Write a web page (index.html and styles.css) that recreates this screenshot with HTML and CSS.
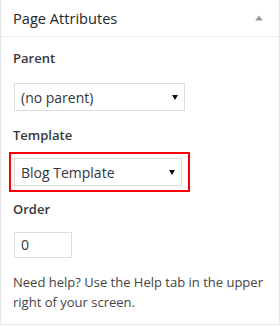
FILE: index.html
```html
<!DOCTYPE html>
<html>
<head>
<meta charset="utf-8">
<link rel="stylesheet" href="styles.css">
</head>
<body>
<div class="panel">
  <div class="panel-header">
    <h2 class="panel-title">Page Attributes</h2>
    <svg class="toggle" width="8" height="6" viewBox="0 0 8 6"><path d="M4 0.5 L7.8 5.5 L0.2 5.5 Z" fill="#999"/></svg>
  </div>
  <div class="panel-body">
    <p class="label label-first">Parent</p>
    <div class="select select-wide">
      <span>(no parent)</span>
      <svg class="caret" width="6" height="5" viewBox="0 0 6 5"><path d="M0 0 H6 L3 5 Z" fill="#111"/></svg>
    </div>
    <p class="label">Template</p>
    <div class="highlight">
      <div class="select select-narrow">
        <span>Blog Template</span>
        <svg class="caret" width="6" height="5" viewBox="0 0 6 5"><path d="M0 0 H6 L3 5 Z" fill="#111"/></svg>
      </div>
    </div>
    <p class="label label-order">Order</p>
    <div class="input">0</div>
    <p class="help">Need help? Use the Help tab in the upper right of your screen.</p>
  </div>
</div>
</body>
</html>
```
FILE: styles.css
```css
html, body {
  margin: 0;
  padding: 0;
  background: #fff;
}
body {
  font-family: "Open Sans", "Noto Sans", sans-serif;
  color: #444;
  font-size: 13px;
}
.panel {
  width: 280px;
  height: 325px;
  box-sizing: border-box;
  border: 1px solid #e5e5e5;
  border-top: none;
}
.panel-header {
  height: 36px;
  border-bottom: 1px solid #eee;
  display: flex;
  align-items: center;
  justify-content: space-between;
  padding: 0 16px 0 12px;
}
.panel-title {
  margin: 0;
  font-size: 14.6px;
  font-weight: 400;
  color: #23282d;
  line-height: 36px;
}
.toggle {
  display: block;
  margin-top: -1px;
}
.panel-body {
  padding: 0 12px 0 12px;
}
.label {
  margin: 0;
  line-height: 18px;
  font-size: 13px;
  font-weight: 600;
  color: #32373c;
  margin-top: 15px;
}
.label-first {
  margin-top: 12px;
}
.label-order {
  margin-top: 8px;
}
.select {
  margin-top: 16px;
  height: 28px;
  box-sizing: border-box;
  border: 1px solid #ddd;
  display: flex;
  align-items: center;
  justify-content: space-between;
  padding: 0 6px 0 6px;
  font-size: 14px;
  color: #32373c;
}
.select-wide {
  width: 171px;
  margin-left: 1px;
}
.select-narrow {
  width: 168px;
  margin-top: 0;
}
.caret {
  display: block;
}
.highlight {
  margin-top: 8px;
  margin-left: -4px;
  width: 181px;
  height: 40px;
  box-sizing: border-box;
  border: 2px solid #f00;
  padding: 4px 0 0 3px;
}
.input {
  margin-top: 14px;
  margin-left: 1px;
  width: 58px;
  height: 26px;
  box-sizing: border-box;
  border: 1px solid #ddd;
  padding: 0 0 0 6px;
  line-height: 24px;
  font-size: 14px;
  color: #32373c;
}
.help {
  margin: 14px 0 0 0;
  line-height: 20px;
  font-size: 13px;
  color: #444;
}
```
